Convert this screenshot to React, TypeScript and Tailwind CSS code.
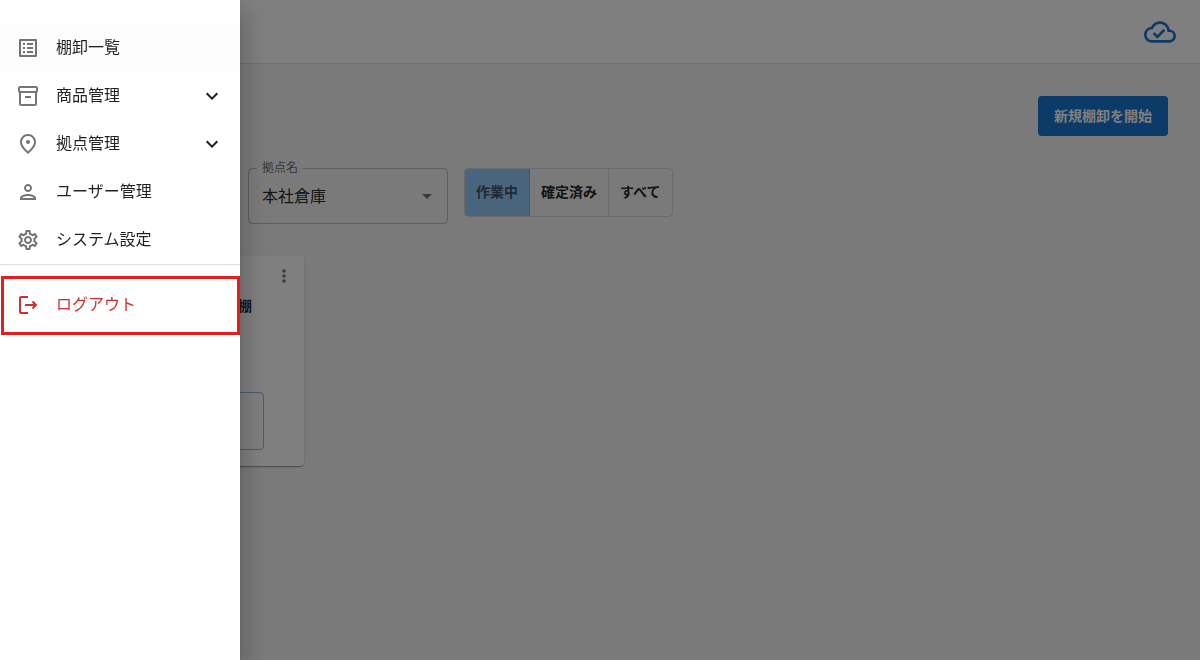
import {
  MdExpandMore,
  MdMoreVert,
  MdOutlineCloudDone,
  MdOutlineInventory2,
  MdOutlineListAlt,
  MdOutlinePerson,
  MdOutlineSettings,
} from "react-icons/md";

const PinIcon = () => (
  <svg viewBox="0 0 24 24" className="size-6" fill="currentColor" aria-hidden="true">
    <path d="M18 10.2C18 6.57 15.35 4 12 4s-6 2.57-6 6.2c0 2.34 1.95 5.44 6 9.14 4.05-3.7 6-6.8 6-9.14zM12 2c4.2 0 8 3.22 8 8.2 0 3.32-2.67 7.25-8 11.8-5.33-4.55-8-8.48-8-11.8C4 5.22 7.8 2 12 2z" />
    <circle cx="12" cy="10" r="2" />
  </svg>
);

const LogoutIcon = () => (
  <svg viewBox="0 0 24 24" className="size-6" fill="none" stroke="currentColor" strokeWidth="2" aria-hidden="true">
    <path d="M12 4H5a1 1 0 0 0-1 1v14a1 1 0 0 0 1 1h7" />
    <path d="M9 12h11M16.5 8.5L20 12l-3.5 3.5" />
  </svg>
);

const menu = [
  { label: "棚卸一覧", icon: <MdOutlineListAlt size={24} />, selected: true },
  { label: "商品管理", icon: <MdOutlineInventory2 size={24} />, expandable: true },
  { label: "拠点管理", icon: <PinIcon />, expandable: true },
  { label: "ユーザー管理", icon: <MdOutlinePerson size={24} /> },
  { label: "システム設定", icon: <MdOutlineSettings size={24} /> },
];

function Drawer() {
  return (
    <nav className="fixed inset-y-0 left-0 z-20 w-60 bg-white pt-6 shadow-[0_8px_10px_-5px_rgba(0,0,0,0.2),0_16px_24px_2px_rgba(0,0,0,0.14),0_6px_30px_5px_rgba(0,0,0,0.12)]">
      <ul className="border-b border-black/12">
        {menu.map((item) => (
          <li key={item.label}>
            <button
              type="button"
              className={`flex h-12 w-full items-center px-4 text-left ${item.selected ? "bg-[#fcfcfc]" : ""}`}
            >
              <span className="w-10 text-black/54">{item.icon}</span>
              <span className="flex-1 pb-0.5">{item.label}</span>
              {item.expandable && <MdExpandMore size={24} />}
            </button>
          </li>
        ))}
      </ul>
      <div className="pt-[11px] pl-px">
        <button
          type="button"
          className="flex h-[59px] w-full items-center border-3 border-[#e81e1e] px-3 pb-px text-left text-[#d32f2f]"
        >
          <span className="w-10">
            <LogoutIcon />
          </span>
          <span className="pb-0.5">ログアウト</span>
        </button>
      </div>
    </nav>
  );
}

function Filters() {
  return (
    <div className="mt-8 flex items-start gap-4 pl-54">
      <fieldset className="relative -mt-2 h-16 w-50 rounded border border-black/23 px-2">
        <legend className="px-[5px] text-xs leading-4 text-black/60">
          <label htmlFor="site">拠点名</label>
        </legend>
        <select id="site" defaultValue="本社倉庫" className="h-10 w-full appearance-none bg-transparent px-[5px]">
          <option>本社倉庫</option>
        </select>
        <svg viewBox="0 0 10 5" className="pointer-events-none absolute top-[18px] right-[15px] h-[5px] w-2.5" aria-hidden="true">
          <path d="M0 0h10L5 5z" fill="#757575" />
        </svg>
      </fieldset>
      <div className="flex h-[49px] divide-x divide-black/12 overflow-hidden rounded border border-black/12 text-sm font-bold">
        <button type="button" className="bg-[#90caf9] px-[11px] pb-0.5 text-black/60">作業中</button>
        <button type="button" className="px-[11px] pb-0.5">確定済み</button>
        <button type="button" className="pr-3 pb-0.5 pl-[11px]">すべて</button>
      </div>
    </div>
  );
}

export default function App() {
  return (
    <div className="min-h-screen bg-[#f5f5f5] font-['Inter','Noto_Sans_CJK_JP',sans-serif] text-base text-black/87">
      <header className="flex h-16 items-center justify-end border-b border-black/12 bg-white px-6">
        <MdOutlineCloudDone size={32} className="text-[#1976d2]" />
      </header>
      <main className="p-8">
        <div className="flex justify-end">
          <button type="button" className="h-10 rounded bg-[#1976d2] px-4 text-sm font-bold text-white">
            新規棚卸を開始
          </button>
        </div>
        <Filters />
        <section className="mt-8 flex h-[210px] w-68 flex-col rounded bg-white shadow-[0_2px_1px_-1px_rgba(0,0,0,0.2),0_1px_1px_0_rgba(0,0,0,0.14),0_1px_3px_0_rgba(0,0,0,0.12)]">
          <button type="button" aria-label="メニュー" className="mt-2.5 mr-2.5 self-end text-black/54">
            <MdMoreVert size={20} />
          </button>
          <h2 className="mt-2.5 pr-13 text-right text-sm font-bold">棚</h2>
          <button
            type="button"
            aria-label="詳細"
            className="mx-10 mt-auto mb-4 h-[58px] rounded border border-[#1976d2]/50"
          />
        </section>
      </main>
      <div className="fixed inset-0 z-10 bg-black/50" />
      <Drawer />
    </div>
  );
}
